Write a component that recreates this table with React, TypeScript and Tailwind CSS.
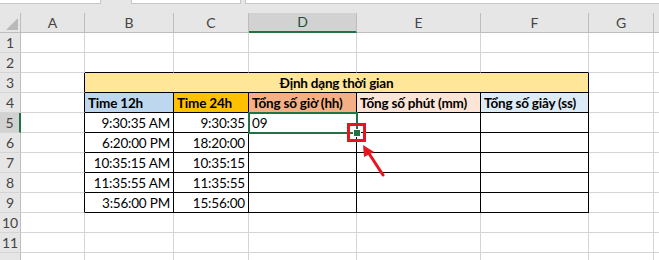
const cols = ["A", "B", "C", "D", "E", "F", "G", ""];

const times = [
  ["9:30:35 AM", "9:30:35", "09"],
  ["6:20:00 PM", "18:20:00", ""],
  ["10:35:15 AM", "10:35:15", ""],
  ["11:35:55 AM", "11:35:55", ""],
  ["3:56:00 PM", "15:56:00", ""],
];

const headers = [
  { text: "Time 12h", bg: "bg-[#bdd7ee]" },
  { text: "Time 24h", bg: "bg-[#ffc000]" },
  { text: "Tổng số giờ (hh)", bg: "bg-[#f4b084]" },
  { text: "Tổng số phút (mm)", bg: "bg-[#fce4d6]" },
  { text: "Tổng số giây (ss)", bg: "bg-[#ddebf7]" },
];

function RowHead({ n, active }: { n?: number; active?: boolean }) {
  return (
    <div
      className={
        "flex items-end justify-center pb-[2px] text-[14px] tracking-normal text-[#444] border-b border-[#d4d4d4] " +
        (active
          ? "bg-[#d2d2d2] border-r-2 border-r-[#217346]"
          : "bg-[#e6e6e6] border-r border-r-[#bdbdbd]")
      }
    >
      {n}
    </div>
  );
}

// plain gridline cell; r / b = black border on that side
function Cell({
  r,
  b,
  className = "",
  children,
}: {
  r?: boolean;
  b?: boolean;
  className?: string;
  children?: React.ReactNode;
}) {
  return (
    <div
      className={
        "flex items-end border-r border-b px-[3px] pb-[2px] whitespace-nowrap overflow-hidden " +
        (r ? "border-r-black " : "border-r-[#d4d4d4] ") +
        (b ? "border-b-black " : "border-b-[#d4d4d4] ") +
        className
      }
    >
      {children}
    </div>
  );
}

export default function App() {
  return (
    <div className="relative w-[659px] h-[260px] overflow-hidden bg-white font-['Lato','Liberation_Sans',sans-serif] text-[13.5px] tracking-[-0.2px] text-black leading-none">
      {/* formula bar edges */}
      <div className="flex h-[13px] bg-[#e6e6e6] items-start">
        <div className="w-[101px] h-[4px] bg-white border-b border-r border-[#c6c6c6]" />
        <div className="w-[30px]" />
        <div className="w-[110px] h-[4px] bg-white border-b border-x border-[#c6c6c6]" />
        <div className="w-[4px]" />
        <div className="flex-1 h-[4px] bg-white border-b border-l border-[#c6c6c6]" />
      </div>

      <div className="grid grid-cols-[21px_64px_89px_75px_108px_124px_108px_65px_1fr] auto-rows-[20px]">
        {/* column headers */}
        <div className="relative bg-[#e6e6e6] border-r border-b border-[#bdbdbd]">
          <div className="absolute right-[2px] bottom-[2px] w-0 h-0 border-l-[12px] border-l-transparent border-b-[12px] border-b-[#b9b9b9]" />
        </div>
        {cols.map((c) =>
          c === "D" ? (
            <div
              key={c}
              className="flex items-center justify-center bg-[#d2d2d2] border-r border-r-[#bdbdbd] border-b-2 border-b-[#217346] text-[14px] tracking-normal text-[#1f4e38]"
            >
              {c}
            </div>
          ) : (
            <div
              key={c || "x"}
              className="flex items-center justify-center bg-[#e6e6e6] border-r border-b border-[#bdbdbd] text-[14px] tracking-normal text-[#444]"
            >
              {c}
            </div>
          )
        )}

        {/* rows 1-2 */}
        {[1, 2].map((n) => (
          <div key={n} className="contents">
            <RowHead n={n} />
            <Cell />
            <Cell b={n === 2} />
            <Cell b={n === 2} />
            <Cell b={n === 2} />
            <Cell b={n === 2} />
            <Cell b={n === 2} />
            <Cell />
            <Cell />
          </div>
        ))}

        {/* row 3 title */}
        <RowHead n={3} />
        <Cell r />
        <Cell r b className="col-span-5 justify-center bg-[#ffe699] font-bold">
          Định dạng thời gian
        </Cell>
        <Cell />
        <Cell />

        {/* row 4 headers */}
        <RowHead n={4} />
        <Cell r />
        {headers.map((h) => (
          <Cell key={h.text} r b className={h.bg + " font-bold"}>
            {h.text}
          </Cell>
        ))}
        <Cell />
        <Cell />

        {/* data rows */}
        {times.map((t, i) => (
          <div key={i} className="contents">
            <RowHead n={5 + i} active={i === 0} />
            <Cell r />
            <Cell r b className="justify-end">
              {t[0]}
            </Cell>
            <Cell r b className="justify-end">
              {t[1]}
            </Cell>
            <Cell r b>
              {t[2]}
            </Cell>
            <Cell r b />
            <Cell r b />
            <Cell />
            <Cell />
          </div>
        ))}

        {/* rows 10-12, 12 is cut by the window */}
        {[10, 11, 0].map((n) => (
          <div key={n} className="contents">
            <RowHead n={n || undefined} />
            {cols.map((c) => (
              <Cell key={c || "x"} />
            ))}
          </div>
        ))}
      </div>

      {/* active cell D5 */}
      <div className="absolute left-[248px] top-[112px] w-[110px] h-[22px] border-2 border-[#217346]" />
      {/* fill handle + red highlight */}
      <div className="absolute left-[347px] top-[123px] w-[19px] h-[19px] border-[3px] border-[#e8141b]" />
      <div className="absolute left-[354px] top-[130px] w-[6px] h-[6px] bg-[#217346] outline outline-1 outline-white" />
      <svg className="absolute left-0 top-0" width="659" height="260">
        <line x1="383" y1="175" x2="368" y2="152" stroke="#e8141b" strokeWidth="3" strokeLinecap="round" />
        <polygon points="363,145 374,152 364,157" fill="#e8141b" />
      </svg>
    </div>
  );
}
